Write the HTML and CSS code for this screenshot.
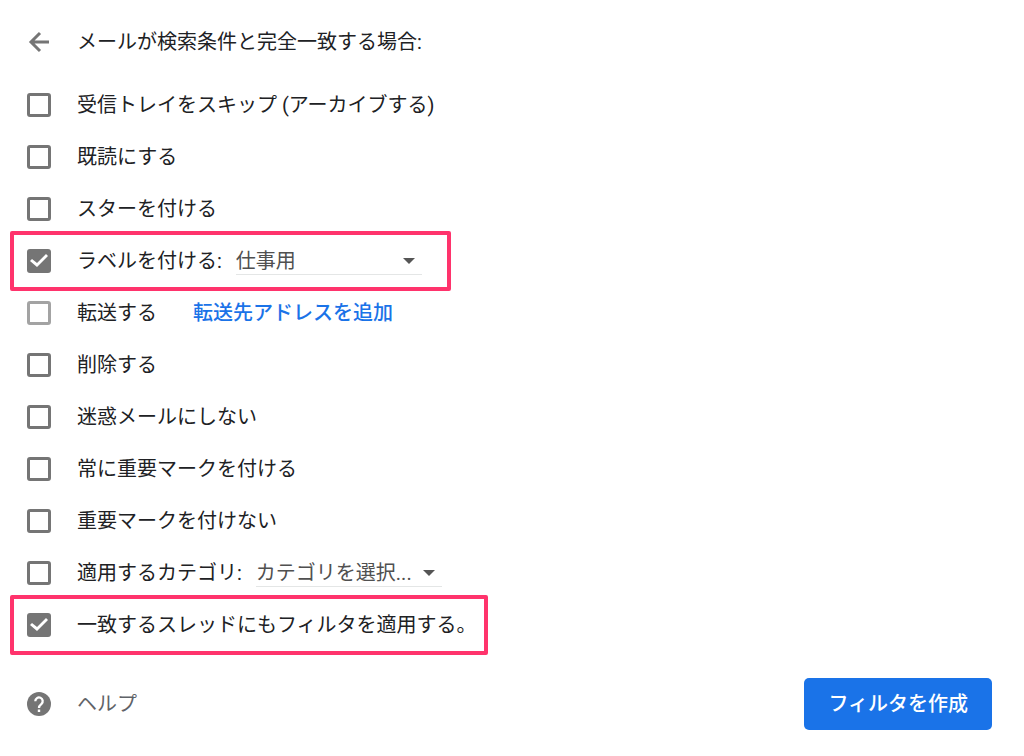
FILE: index.html
```
<!DOCTYPE html>
<html lang="ja">
<head>
    <meta charset="UTF-8">
    <meta name="viewport" content="width=device-width, initial-scale=1.0">
    <title>フィルタを作成</title>
    <link rel="stylesheet" href="styles.css">
</head>
<body>

<form class="filter-form">
    <header class="filter-header">
        <button type="button" class="back" aria-label="戻る">
            <svg width="24" height="24" viewBox="0 0 24 24" fill="none" stroke="#757575" stroke-width="3">
                <path d="M22 12H4.4M13 3L4 12l9 9"/>
            </svg>
        </button>
        <h1>メールが検索条件と完全一致する場合:</h1>
    </header>

    <ul class="action-list">
        <li class="action">
            <input type="checkbox" id="skip">
            <label for="skip">受信トレイをスキップ (アーカイブする)</label>
        </li>
        <li class="action">
            <input type="checkbox" id="read">
            <label for="read">既読にする</label>
        </li>
        <li class="action">
            <input type="checkbox" id="star">
            <label for="star">スターを付ける</label>
        </li>
        <li class="action highlight highlight-label">
            <input type="checkbox" id="label" checked>
            <label for="label">ラベルを付ける:</label>
            <span class="select">
                <select aria-label="ラベル">
                    <option>仕事用</option>
                </select>
            </span>
        </li>
        <li class="action">
            <input type="checkbox" id="forward" disabled>
            <label for="forward">転送する</label>
            <a class="add-address" href="#">転送先アドレスを追加</a>
        </li>
        <li class="action">
            <input type="checkbox" id="delete">
            <label for="delete">削除する</label>
        </li>
        <li class="action">
            <input type="checkbox" id="spam">
            <label for="spam">迷惑メールにしない</label>
        </li>
        <li class="action">
            <input type="checkbox" id="important">
            <label for="important">常に重要マークを付ける</label>
        </li>
        <li class="action">
            <input type="checkbox" id="not-important">
            <label for="not-important">重要マークを付けない</label>
        </li>
        <li class="action">
            <input type="checkbox" id="category">
            <label for="category">適用するカテゴリ:</label>
            <span class="select">
                <select aria-label="カテゴリ">
                    <option>カテゴリを選択...</option>
                </select>
            </span>
        </li>
        <li class="action highlight highlight-apply">
            <input type="checkbox" id="apply" checked>
            <label for="apply">一致するスレッドにもフィルタを適用する。</label>
        </li>
    </ul>

    <footer class="filter-footer">
        <a class="help" href="#">
            <svg width="24" height="24" viewBox="0 0 24 24">
                <circle cx="12" cy="12" r="12" fill="#757575"/>
                <path d="M8.3 9.2a3.7 3.7 0 1 1 6.2 2.7c-1.4 1.2-2.5 1.8-2.5 4" fill="none" stroke="#fff" stroke-width="2.3"/>
                <path d="M10.8 17.6h2.4V20h-2.4z" fill="#fff"/>
            </svg>
            ヘルプ
        </a>
        <button type="submit" class="create">フィルタを作成</button>
    </footer>
</form>

</body>
</html>
```
FILE: styles.css
```
* {
    box-sizing: border-box;
}
body {
    margin: 0;
    background-color: #fff;
    color: #202124;
    font-family: Roboto, "Noto Sans CJK JP", sans-serif;
    font-size: 20px;
    line-height: 28px;
}
.filter-form {
    padding: 16px 32px 26px 27px;
}
.filter-header {
    display: flex;
    align-items: center;
    gap: 26px;
    height: 52px;
    margin-bottom: 11px;
}
.filter-header h1 {
    margin: 0;
    font-size: 20px;
    font-weight: 400;
}
.back {
    display: flex;
    padding: 0;
    border: none;
    background: none;
    cursor: pointer;
}
.action-list {
    list-style: none;
    margin: 0;
    padding: 0;
}
.action {
    display: flex;
    align-items: center;
    position: relative;
    width: fit-content;
    height: 52px;
}
.action label {
    margin-left: 26px;
}
/* checkboxes */
input[type="checkbox"] {
    appearance: none;
    width: 24px;
    height: 24px;
    margin: 0;
    border: 3px solid #757575;
    border-radius: 3px;
    cursor: pointer;
}
input[type="checkbox"]:disabled {
    border-color: #a3a3a3;
    cursor: default;
}
input[type="checkbox"]:checked {
    border: none;
    background-color: #757575;
}
input[type="checkbox"]:checked::before {
    content: "";
    display: block;
    width: 24px;
    height: 24px;
    background-color: #fff;
    clip-path: polygon(3px 12px, 5px 10px, 10px 14px, 19px 5px, 21px 7px, 10px 18px);
}
/* drop-downs */
.select {
    position: relative;
    margin-left: 14px;
}
.select::after {
    content: "";
    position: absolute;
    top: 11px;
    right: 7px;
    border: 6px solid transparent;
    border-top-color: #555;
    border-bottom: none;
    pointer-events: none;
}
.select select {
    appearance: none;
    display: block;
    width: 186px;
    height: 28px;
    padding: 0;
    border: none;
    border-bottom: 1px solid #e4e6e6;
    border-radius: 0;
    background: none;
    color: #505050;
    font: inherit;
}
.add-address {
    margin-left: 36px;
    color: #1a73e8;
    font-weight: 500;
    text-decoration: none;
}
/* pink frames */
.highlight::after {
    content: "";
    position: absolute;
    top: -4px;
    bottom: -4px;
    left: -17px;
    border: 4px solid #ff336c;
    border-radius: 2px;
    pointer-events: none;
}
.highlight-label::after {
    right: -29px;
}
.highlight-apply::after {
    right: -11px;
}
.filter-footer {
    display: flex;
    justify-content: space-between;
    align-items: center;
    margin-top: 27px;
}
.help {
    display: flex;
    align-items: center;
    gap: 26px;
    color: #5f6368;
    text-decoration: none;
}
.create {
    height: 52px;
    padding: 0 24px;
    border: none;
    border-radius: 5px;
    background-color: #1a73e8;
    color: #fff;
    font: inherit;
    font-weight: 500;
    cursor: pointer;
}
.create:hover {
    background-color: #1967d2;
}
```
